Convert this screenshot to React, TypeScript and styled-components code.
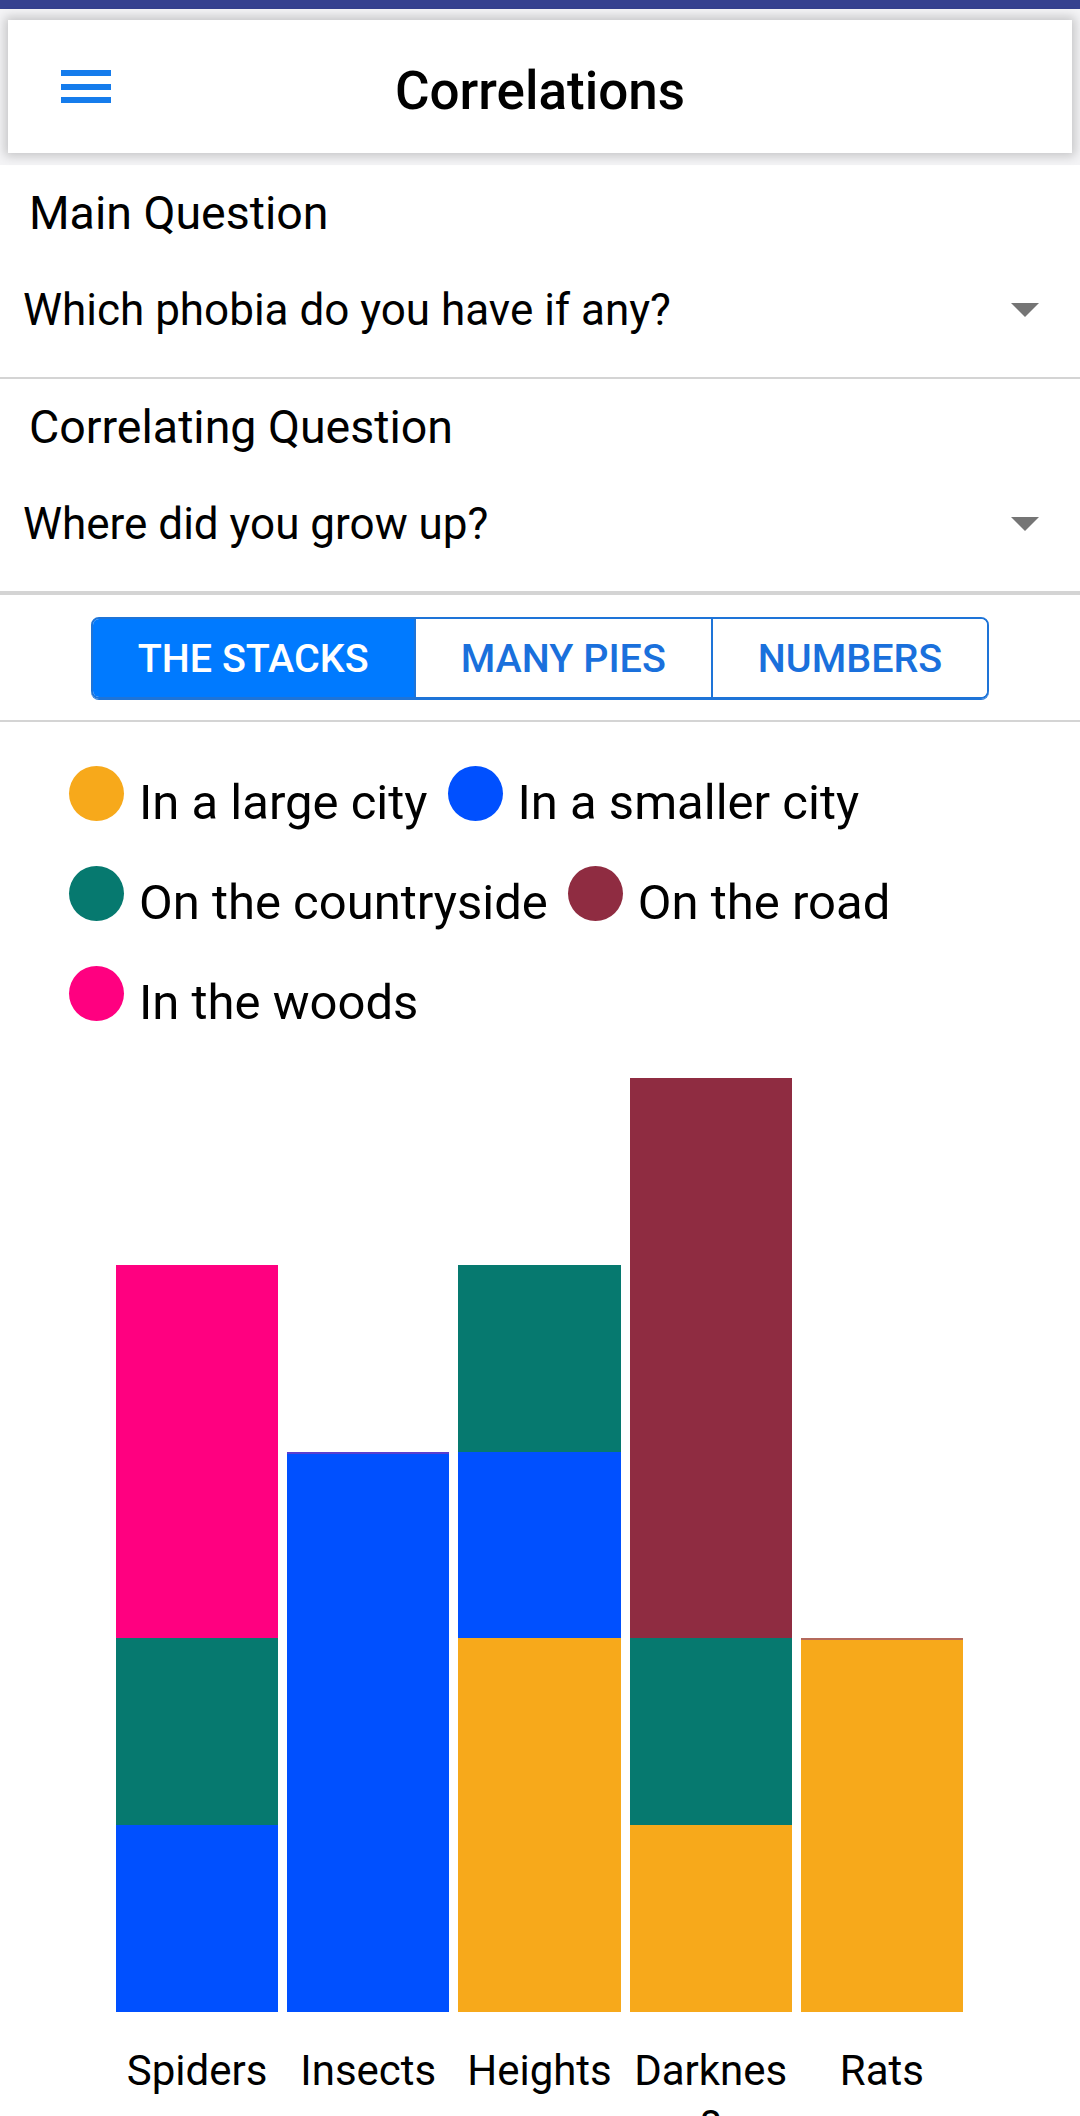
import React from "react";
import styled, { createGlobalStyle } from "styled-components";

type Series = { name: string; color: string };
type Bar = { label: string; values: number[]; edge?: string };

const series: Series[] = [
  { name: "In a large city", color: "#f7a91b" },
  { name: "In a smaller city", color: "#0050ff" },
  { name: "On the countryside", color: "#06796f" },
  { name: "On the road", color: "#8f2c41" },
  { name: "In the woods", color: "#ff0080" },
];

const bars: Bar[] = [
  { label: "Spiders", values: [0, 1, 1, 0, 2] },
  { label: "Insects", values: [0, 3, 0, 0, 0], edge: "#5a3fd0" },
  { label: "Heights", values: [2, 1, 1, 0, 0] },
  { label: "Darkness", values: [1, 0, 1, 3, 0] },
  { label: "Rats", values: [2, 0, 0, 0, 0], edge: "#b46a5c" },
];

const maxTotal = Math.max(...bars.map((b) => b.values.reduce((a, v) => a + v, 0)));

const GlobalStyle = createGlobalStyle`
  html, body {
    margin: 0;
    padding: 0;
    background: #fff;
  }
  body {
    font-family: Roboto, "Noto Sans", "Liberation Sans", sans-serif;
    color: #000;
    overflow: hidden;
  }
  * {
    box-sizing: border-box;
  }
`;

const StatusStrip = styled.div`
  height: 9px;
  background: #35418f;
`;

const HeaderWrap = styled.div`
  padding: 11px 8px 12px;
  background: #f4f4f6;
`;

const HeaderCard = styled.header`
  height: 133px;
  background: #fff;
  box-shadow: 0 0 10px 3px rgba(0, 0, 0, 0.2);
  display: grid;
  grid-template-columns: 1fr auto 1fr;
  align-items: center;
  padding: 0 53px;
`;

const MenuButton = styled.button`
  justify-self: start;
  border: 0;
  background: none;
  padding: 0;
  display: flex;
  cursor: pointer;
`;

const Title = styled.h1`
  margin: 0;
  padding-top: 8px;
  font-size: 53px;
  font-weight: 500;
  line-height: 60px;
  color: #000;
`;

const QuestionBlock = styled.section`
  padding-top: 22px;
`;

const QuestionLabel = styled.div`
  padding-left: 29px;
  font-size: 46.5px;
  line-height: 52px;
`;

const SelectRow = styled.div`
  display: flex;
  align-items: center;
  justify-content: space-between;
  margin: 45px 0 41px;
  padding: 0 41px 0 23px;
  font-size: 44px;
  line-height: 52px;
`;

const Caret = styled.span`
  width: 0;
  height: 0;
  border-left: 14px solid transparent;
  border-right: 14px solid transparent;
  border-top: 14px solid #757575;
`;

const Divider = styled.div<{ $thick: number }>`
  height: ${(p) => p.$thick}px;
  background: #d4d4d4;
`;

const TabsBar = styled.div`
  display: flex;
  justify-content: center;
  padding: 22px 0 21px;
`;

const TabGroup = styled.div`
  display: flex;
  height: 82px;
  border: 2px solid #1e74d8;
  border-radius: 8px;
  overflow: hidden;
  box-shadow: 0 1px 0 #1e74d8;
`;

const Tab = styled.button<{ $active?: boolean }>`
  border: 0;
  border-left: 2px solid #1e74d8;
  padding: 0 45px;
  font-family: inherit;
  font-size: 39.5px;
  font-weight: 500;
  background: ${(p) => (p.$active ? "#007aff" : "#fff")};
  color: ${(p) => (p.$active ? "#fff" : "#1a70dc")};
  cursor: pointer;

  &:first-child {
    border-left: 0;
  }
`;

const Legend = styled.div`
  display: flex;
  flex-wrap: wrap;
  column-gap: 20px;
  padding: 21px 40px 0 69px;
`;

const LegendItem = styled.div`
  display: flex;
  align-items: center;
  gap: 15px;
  height: 100px;
`;

const Dot = styled.span<{ $color: string }>`
  width: 55px;
  height: 55px;
  border-radius: 50%;
  background: ${(p) => p.$color};
  flex-shrink: 0;
`;

const LegendText = styled.span`
  padding-top: 20px;
  font-size: 49px;
  line-height: 58px;
  white-space: nowrap;
`;

const Chart = styled.div`
  padding: 35px 117px 0 116px;
`;

const Plot = styled.div`
  height: 934px;
  display: grid;
  grid-template-columns: repeat(5, 1fr);
  column-gap: 9px;
`;

const Column = styled.div<{ $edge?: string }>`
  height: 100%;
  display: flex;
  flex-direction: column-reverse;
  justify-content: flex-start;

  & > div:last-child {
    box-shadow: ${(p) => (p.$edge ? `inset 0 2px 0 ${p.$edge}` : "none")};
  }
`;

const Segment = styled.div<{ $color: string }>`
  background: ${(p) => p.$color};
  flex-shrink: 0;
`;

const Labels = styled.div`
  display: grid;
  grid-template-columns: repeat(5, 1fr);
  column-gap: 9px;
  padding-top: 35px;
`;

const AxisLabel = styled.div`
  text-align: center;
  font-size: 42px;
  line-height: 48px;
  overflow-wrap: anywhere;
`;

const MenuIcon = () => (
  <svg width="50" height="34" viewBox="0 0 50 34">
    <rect x="0" y="0" width="50" height="6" fill="#157cec" />
    <rect x="0" y="14" width="50" height="6" fill="#157cec" />
    <rect x="0" y="27" width="50" height="6" fill="#157cec" />
  </svg>
);

const App: React.FC = () => {
  return (
    <>
      <GlobalStyle />
      <StatusStrip />
      <HeaderWrap>
        <HeaderCard>
          <MenuButton aria-label="menu">
            <MenuIcon />
          </MenuButton>
          <Title>Correlations</Title>
          <span />
        </HeaderCard>
      </HeaderWrap>

      <QuestionBlock>
        <QuestionLabel>Main Question</QuestionLabel>
        <SelectRow>
          <span>Which phobia do you have if any?</span>
          <Caret />
        </SelectRow>
      </QuestionBlock>
      <Divider $thick={2} />

      <QuestionBlock>
        <QuestionLabel>Correlating Question</QuestionLabel>
        <SelectRow>
          <span>Where did you grow up?</span>
          <Caret />
        </SelectRow>
      </QuestionBlock>
      <Divider $thick={4} />

      <TabsBar>
        <TabGroup>
          <Tab $active>THE STACKS</Tab>
          <Tab>MANY PIES</Tab>
          <Tab>NUMBERS</Tab>
        </TabGroup>
      </TabsBar>
      <Divider $thick={2} />

      <Legend>
        {series.map((s) => (
          <LegendItem key={s.name}>
            <Dot $color={s.color} />
            <LegendText>{s.name}</LegendText>
          </LegendItem>
        ))}
      </Legend>

      <Chart>
        <Plot>
          {bars.map((bar) => (
            <Column key={bar.label} $edge={bar.edge}>
              {bar.values.map((v, i) =>
                v > 0 ? (
                  <Segment
                    key={i}
                    $color={series[i].color}
                    style={{ height: `${(v / maxTotal) * 100}%` }}
                  />
                ) : null
              )}
            </Column>
          ))}
        </Plot>
        <Labels>
          {bars.map((bar) => (
            <AxisLabel key={bar.label}>{bar.label}</AxisLabel>
          ))}
        </Labels>
      </Chart>
    </>
  );
};

export default App;
